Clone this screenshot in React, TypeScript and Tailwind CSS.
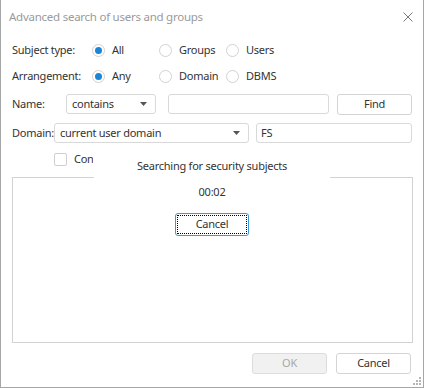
import React from "react";

const font = { fontFamily: '"Noto Sans", "Open Sans", sans-serif' };

function Radio({ label, checked }: { label: string; checked?: boolean }) {
  return (
    <div className="flex w-[67px] items-center gap-[7px]">
      <span className="flex h-[13px] w-[13px] items-center justify-center rounded-full border border-[#d2d2d2] bg-white">
        {checked && <span className="h-[7px] w-[7px] rounded-full bg-[#1c86d6]" />}
      </span>
      <span>{label}</span>
    </div>
  );
}

function Caret() {
  return (
    <svg width="7" height="4" viewBox="0 0 7 4" className="shrink-0">
      <path d="M0 0h7L3.5 4z" fill="#555" />
    </svg>
  );
}

function Button({ children, disabled }: { children: React.ReactNode; disabled?: boolean }) {
  return (
    <button
      className={
        disabled
          ? "h-[21px] w-[75px] rounded-[3px] border border-[#dcdcdc] bg-[#f1f1f1] text-[#a8a8a8]"
          : "h-[21px] w-[75px] rounded-[3px] border border-[#d4d4d4] bg-white text-[#333]"
      }
    >
      {children}
    </button>
  );
}

export default function App() {
  return (
    <div
      style={font}
      className="relative flex h-[388px] w-[424px] flex-col border-x border-b border-[#a6a6a6] bg-white text-[11px] tracking-[-0.25px] text-[#333]"
    >
      {/* title bar */}
      <div className="flex h-[34px] items-center justify-between pl-[8px] pr-[10px]">
        <span className="text-[11.5px] text-[#9a9a9a]">Advanced search of users and groups</span>
        <svg width="10" height="10" viewBox="0 0 10 10">
          <path d="M0.5 0.5l9 9M9.5 0.5l-9 9" stroke="#7a7a7a" strokeWidth="1" />
        </svg>
      </div>

      <div className="flex flex-col px-[11px]">
        <div className="mt-[6px] flex h-[20px] items-center">
          <span className="w-[80px]">Subject type:</span>
          <Radio label="All" checked />
          <Radio label="Groups" />
          <Radio label="Users" />
        </div>
        <div className="mt-[6px] flex h-[20px] items-center">
          <span className="w-[80px]">Arrangement:</span>
          <Radio label="Any" checked />
          <Radio label="Domain" />
          <Radio label="DBMS" />
        </div>

        <div className="mt-[8px] flex h-[20px] items-center">
          <span className="w-[54px]">Name:</span>
          <div className="flex h-full w-[90px] items-center justify-between rounded-[3px] border border-[#d9d9d9] pl-[5px] pr-[8px]">
            <span>contains</span>
            <Caret />
          </div>
          <div className="ml-[12px] h-full w-[161px] rounded-[3px] border border-[#d9d9d9]" />
          <div className="ml-[8px]">
            <Button>Find</Button>
          </div>
        </div>

        <div className="mt-[9px] flex h-[20px] items-center">
          <span className="w-[42px] whitespace-nowrap">Domain:</span>
          <div className="flex h-full w-[195px] items-center justify-between rounded-[3px] border border-[#d9d9d9] pl-[5px] pr-[8px]">
            <span>current user domain</span>
            <Caret />
          </div>
          <div className="ml-[7px] flex h-full w-[156px] items-center rounded-[3px] border border-[#d9d9d9] pl-[4px]">
            FS
          </div>
        </div>

        <div className="mt-[6px] flex h-[20px] items-center pl-[42px]">
          <span className="h-[13px] w-[13px] rounded-[2px] border border-[#cfcfcf]" />
          <span className="ml-[7px] w-[19px] overflow-hidden whitespace-nowrap">Consider nested groups</span>
        </div>

        <div className="mt-[8px] h-[166px] w-[401px] border border-[#d2d2d2]" />

        <div className="mt-[10px] flex justify-end gap-[9px] pr-[1px]">
          <Button disabled>OK</Button>
          <Button>Cancel</Button>
        </div>
      </div>

      {/* search progress popup */}
      <div className="absolute left-[93px] top-[146px] flex h-[104px] w-[236px] flex-col items-center bg-white">
        <span className="mt-[12px]">Searching for security subjects</span>
        <span className="mt-[9px]">00:02</span>
        <button className="mt-[13px] flex h-[23px] w-[74px] items-center justify-center rounded-[3px] border border-[#3a98dc] p-[1px]">
          <span className="flex h-full w-full items-center justify-center border border-dotted border-black">
            Cancel
          </span>
        </button>
      </div>

      {/* resize grip */}
      <svg width="10" height="10" viewBox="0 0 10 10" className="absolute bottom-[1px] right-[1px]">
        <g fill="#b5b5b5">
          <rect x="7" y="1" width="2" height="2" />
          <rect x="4" y="4" width="2" height="2" />
          <rect x="7" y="4" width="2" height="2" />
          <rect x="1" y="7" width="2" height="2" />
          <rect x="4" y="7" width="2" height="2" />
          <rect x="7" y="7" width="2" height="2" />
        </g>
      </svg>
    </div>
  );
}
